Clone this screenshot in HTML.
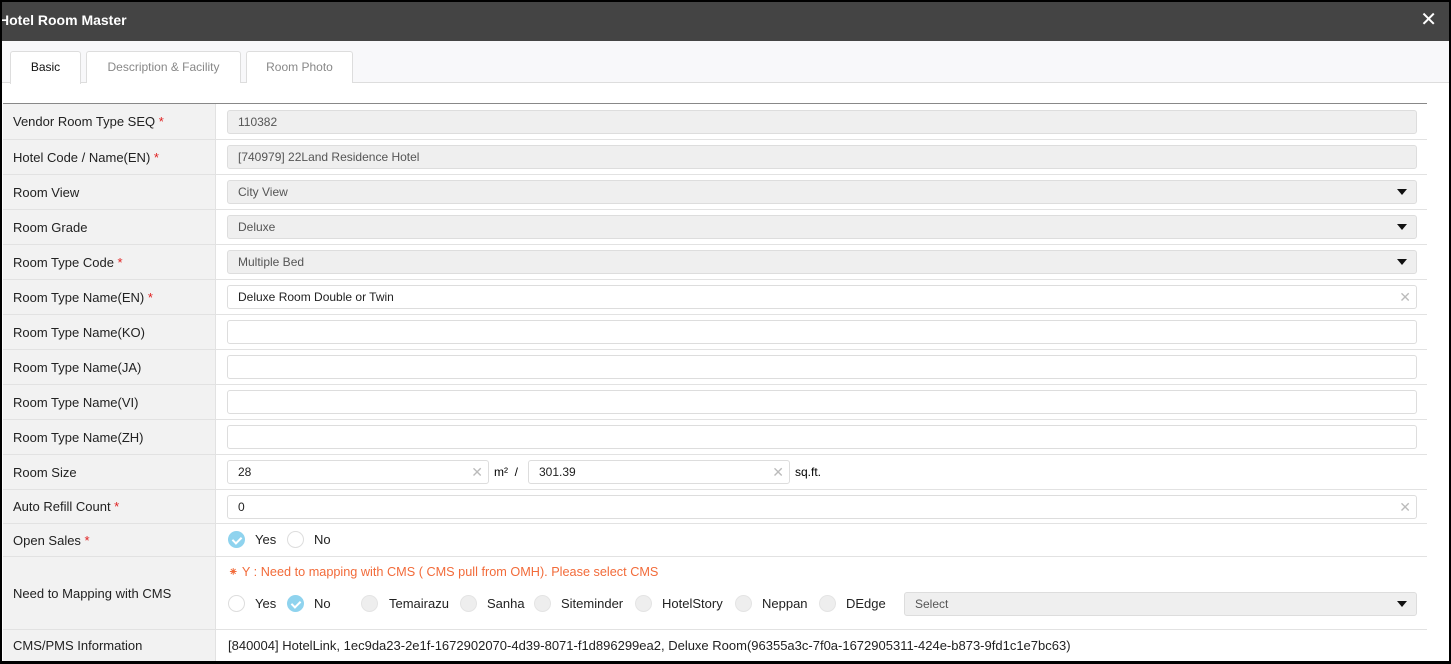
<!DOCTYPE html>
<html><head><meta charset="utf-8"><style>
*{box-sizing:border-box;margin:0;padding:0}
body{width:1451px;height:664px;background:#000;font-family:"Liberation Sans",sans-serif;position:relative;overflow:hidden}
.dlg{position:absolute;left:2px;top:2px;width:1447px;height:659px;background:#fff;overflow:hidden}
.hd{position:absolute;left:0;top:0;width:100%;height:39px;background:#444;color:#fff;font-weight:bold;font-size:14px;line-height:37px;padding-left:0}
.hd .t{position:absolute;left:-3px}
.hd .x{position:absolute;right:12px;top:0;font-size:20px;font-weight:normal}
.tabs{position:absolute;left:0;top:39px;width:100%;height:42px;background:#f8f8fa;border-bottom:1px solid #ddd}
.tab{position:absolute;top:10px;height:32px;border:1px solid #ddd;border-bottom:none;background:#fff;font-size:12px;color:#888;text-align:center;line-height:30px;border-radius:3px 3px 0 0}
.tab.a{color:#111;height:33px}
.topline{position:absolute;left:1px;top:101px;width:1424px;height:1px;background:#888}
.row{position:absolute;left:1px;width:1424px;border-bottom:1px solid #e2e2e2}
.lab{position:absolute;left:0;top:0;bottom:0;width:213px;background:#f2f2f2;border-right:1px solid #e2e2e2;font-size:13px;color:#222;padding-left:10px;display:flex;align-items:center}
.req{color:#e02020}
.inp{position:absolute;left:224px;width:1190px;top:5px;height:24px;border:1px solid #ddd;border-radius:3px;font-size:12px;color:#222;padding-left:10px;line-height:22px;background:#fff}
.dis{background:#efefef;color:#555}
.arr{position:absolute;right:9px;top:8px;width:0;height:0;border-left:5px solid transparent;border-right:5px solid transparent;border-top:6px solid #111}
.clr{position:absolute;right:5px;top:0;color:#bbb;font-size:14px}
.rad{position:absolute;width:17px;height:17px;border-radius:50%;border:1px solid #ddd;background:#fff}
.rad.on{background:#8fd3ee;border-color:#8fd3ee}
.rad.on:after{content:"";position:absolute;left:5px;top:3px;width:4px;height:7px;border-right:2px solid #fff;border-bottom:2px solid #fff;transform:rotate(45deg)}
.rad.g{background:#eee;border-color:#e4e4e4}
.rl{position:absolute;font-size:13px;color:#222}
</style></head><body>
<div class="dlg">
<div class="hd"><span class="t">Hotel Room Master</span><span class="x">✕</span></div>
<div class="tabs">
<div class="tab a" style="left:8px;width:71px">Basic</div>
<div class="tab" style="left:84px;width:155px">Description &amp; Facility</div>
<div class="tab" style="left:244px;width:107px">Room Photo</div>
</div>
<div class="topline"></div>

<div class="row" style="top:102px;height:36px"><div class="lab">Vendor Room Type SEQ&nbsp;<span class="req">*</span></div><div class="inp dis" style="top:6px">110382</div></div>
<div class="row" style="top:138px;height:35px"><div class="lab">Hotel Code / Name(EN)&nbsp;<span class="req">*</span></div><div class="inp dis">[740979] 22Land Residence Hotel</div></div>
<div class="row" style="top:173px;height:35px"><div class="lab">Room View</div><div class="inp dis">City View<span class="arr"></span></div></div>
<div class="row" style="top:208px;height:35px"><div class="lab">Room Grade</div><div class="inp dis">Deluxe<span class="arr"></span></div></div>
<div class="row" style="top:243px;height:35px"><div class="lab">Room Type Code&nbsp;<span class="req">*</span></div><div class="inp dis">Multiple Bed<span class="arr"></span></div></div>
<div class="row" style="top:278px;height:35px"><div class="lab">Room Type Name(EN)&nbsp;<span class="req">*</span></div><div class="inp">Deluxe Room Double or Twin<span class="clr">✕</span></div></div>
<div class="row" style="top:313px;height:35px"><div class="lab">Room Type Name(KO)</div><div class="inp"></div></div>
<div class="row" style="top:348px;height:35px"><div class="lab">Room Type Name(JA)</div><div class="inp"></div></div>
<div class="row" style="top:383px;height:35px"><div class="lab">Room Type Name(VI)</div><div class="inp"></div></div>
<div class="row" style="top:418px;height:35px"><div class="lab">Room Type Name(ZH)</div><div class="inp"></div></div>
<div class="row" style="top:453px;height:35px"><div class="lab">Room Size</div>
<div class="inp" style="width:262px">28<span class="clr">✕</span></div>
<span style="position:absolute;left:491px;top:10px;font-size:12px">m² &nbsp;/</span>
<div class="inp" style="left:525px;width:262px">301.39<span class="clr">✕</span></div>
<span style="position:absolute;left:792px;top:10px;font-size:12px">sq.ft.</span></div>
<div class="row" style="top:488px;height:34px"><div class="lab">Auto Refill Count&nbsp;<span class="req">*</span></div><div class="inp">0<span class="clr">✕</span></div></div>
<div class="row" style="top:522px;height:33px"><div class="lab">Open Sales&nbsp;<span class="req">*</span></div>
<span class="rad on" style="left:225px;top:7px"></span><span class="rl" style="left:252px;top:8px">Yes</span>
<span class="rad" style="left:284px;top:7px"></span><span class="rl" style="left:311px;top:8px">No</span></div>
<div class="row" style="top:555px;height:73px"><div class="lab">Need to Mapping with CMS</div>
<div style="position:absolute;left:225px;top:7px;font-size:12.7px;color:#f26b3a">⁕ Y : Need to mapping with CMS ( CMS pull from OMH). Please select CMS</div>
<span class="rad" style="left:225px;top:38px"></span><span class="rl" style="left:252px;top:39px">Yes</span>
<span class="rad on" style="left:284px;top:38px"></span><span class="rl" style="left:311px;top:39px">No</span>
<span class="rad g" style="left:358px;top:38px"></span><span class="rl" style="left:386px;top:39px">Temairazu</span>
<span class="rad g" style="left:457px;top:38px"></span><span class="rl" style="left:484px;top:39px">Sanha</span>
<span class="rad g" style="left:531px;top:38px"></span><span class="rl" style="left:558px;top:39px">Siteminder</span>
<span class="rad g" style="left:632px;top:38px"></span><span class="rl" style="left:659px;top:39px">HotelStory</span>
<span class="rad g" style="left:732px;top:38px"></span><span class="rl" style="left:759px;top:39px">Neppan</span>
<span class="rad g" style="left:816px;top:38px"></span><span class="rl" style="left:843px;top:39px">DEdge</span>
<div class="inp dis" style="left:901px;width:513px;top:35px">Select<span class="arr"></span></div></div>
<div class="row" style="top:628px;height:31px;border-bottom:none"><div class="lab">CMS/PMS Information</div>
<div style="position:absolute;left:225px;top:8px;font-size:13px;color:#222">[840004] HotelLink, 1ec9da23-2e1f-1672902070-4d39-8071-f1d896299ea2, Deluxe Room(96355a3c-7f0a-1672905311-424e-b873-9fd1c1e7bc63)</div></div>
</div>
</body></html>
